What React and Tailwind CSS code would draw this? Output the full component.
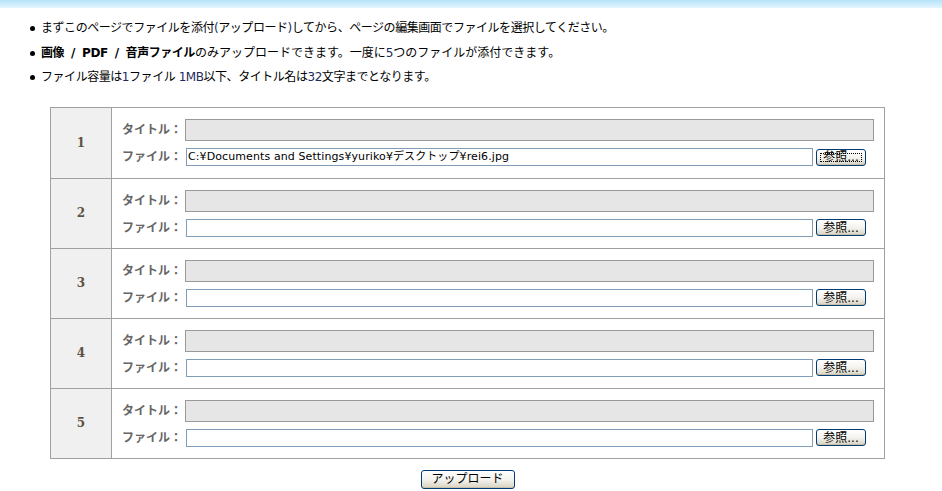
import React from "react";

const jp = { fontFamily: '"DejaVu Sans", "Noto Sans CJK JP", sans-serif' };

function XPButton({ children, focus, className = "" }) {
  return (
    <div
      className={
        "flex items-center justify-center rounded-[3px] border border-[#003c74] bg-gradient-to-b from-[#ffffff] via-[#f4f3ee] to-[#d8d2c2] text-[12px] leading-none text-black shadow-[inset_0_-1px_0_#c9c0a8] " +
        className
      }
      style={jp}
    >
      {focus ? (
        <div className="flex h-[calc(100%-6px)] w-[calc(100%-6px)] items-center justify-center border border-dotted border-black">
          {children}
        </div>
      ) : (
        children
      )}
    </div>
  );
}

function Row({ n, value, first }) {
  return (
    <div className={"flex h-[70px] " + (first ? "" : "border-t border-[#a0a0a0]")}>
      <div
        className="flex w-[61px] items-center justify-center border-r border-[#a0a0a0] bg-[#f0f0f0] text-[12px] font-bold text-[#5e5244]"
        style={{ fontFamily: '"DejaVu Serif", serif' }}
      >
        {n}
      </div>
      <div className="flex flex-1 flex-col justify-center gap-[7px] pl-[10px] pr-[10px]">
        <div className="flex items-center">
          <div className="w-[63px] text-[12px] font-bold text-[#666]" style={jp}>
            タイトル：
          </div>
          <div className="h-[22px] flex-1 border border-[#999] bg-[#e6e6e6]" />
        </div>
        <div className="flex items-center">
          <div className="w-[64px] text-[12px] font-bold text-[#666]" style={jp}>
            ファイル：
          </div>
          <div
            className="flex h-[18px] w-[627px] items-center overflow-hidden whitespace-nowrap border border-[#7f9db9] bg-white pl-[1px] text-[11px] tracking-[0.1px] text-black"
            style={jp}
          >
            {value}
          </div>
          <XPButton focus={first} className="ml-[3px] h-[17px] w-[50px]">
            参照...
          </XPButton>
        </div>
      </div>
    </div>
  );
}

export default function App() {
  const num = "text-[#1c2a5c]";
  return (
    <div className="min-h-[491px] w-[942px] bg-white text-black" style={jp}>
      <div className="h-[8px] bg-gradient-to-b from-[#b6e3fa] to-[#e3f6fe]" />
      <ul className="mt-[8px] pl-[41px] text-[12px] leading-[24.5px] tracking-[-0.45px]">
        <li className="relative">
          <span className="absolute left-[-11px] top-[10px] h-[5px] w-[5px] rounded-full bg-black" />
          まずこのページでファイルを添付<span className={num}>(</span>アップロード<span className={num}>)</span>してから、ページの編集画面でファイルを選択してください。
        </li>
        <li className="relative">
          <span className="absolute left-[-11px] top-[10px] h-[5px] w-[5px] rounded-full bg-black" />
          <b>
            画像<span className="mx-[7px]">/</span>PDF<span className="mx-[7px]">/</span>音声ファイル
          </b>
          <span className="tracking-[0px]">
            のみアップロードできます。一度に<span className={num}>5</span>つのファイルが添付できます。
          </span>
        </li>
        <li className="relative">
          <span className="absolute left-[-11px] top-[10px] h-[5px] w-[5px] rounded-full bg-black" />
          ファイル容量は<span className={num}>1</span>ファイル <span className={num}>1MB</span>以下、タイトル名は<span className={num}>32</span>文字までとなります。
        </li>
      </ul>
      <div className="ml-[50px] mt-[17px] w-[835px]">
        <div className="border border-[#a0a0a0]">
          <Row n="1" first value="C:¥Documents and Settings¥yuriko¥デスクトップ¥rei6.jpg" />
          <Row n="2" value="" />
          <Row n="3" value="" />
          <Row n="4" value="" />
          <Row n="5" value="" />
        </div>
        <div className="mt-[11px] flex justify-center">
          <XPButton className="h-[19px] w-[94px]">アップロード</XPButton>
        </div>
      </div>
    </div>
  );
}
